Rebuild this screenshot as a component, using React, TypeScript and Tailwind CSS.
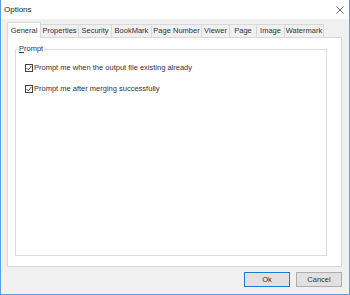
import React from "react";

const tabs = [
  { label: "General", w: 34, selected: true },
  { label: "Properties", w: 38 },
  { label: "Security", w: 33 },
  { label: "BookMark", w: 40 },
  { label: "Page Number", w: 50 },
  { label: "Viewer", w: 28 },
  { label: "Page", w: 27 },
  { label: "Image", w: 28 },
  { label: "Watermark", w: 39 },
];

function Check({ label }: { label: string }) {
  return (
    <div className="flex items-center h-[9px]">
      <div className="w-[8px] h-[8px] border border-[#444] bg-white flex items-center justify-center">
        <svg width="6" height="6" viewBox="0 0 6 6">
          <path d="M0.5 3 L2.3 4.8 L5.5 0.8" fill="none" stroke="#333" strokeWidth="0.9" />
        </svg>
      </div>
      <span className="ml-[1px] leading-none">{label}</span>
    </div>
  );
}

export default function App() {
  return (
    <div
      className="w-[350px] h-[295px] bg-[#f0f0f0] border-x border-b border-[#5b9fe0] flex flex-col text-[#333] text-[7.5px]"
      style={{ fontFamily: '"Liberation Sans", Arial, sans-serif' }}
    >
      <div className="h-[19px] bg-white flex items-center justify-between pl-[3px] pr-[5px]">
        <span className="text-[8px] text-[#222]">Options</span>
        <svg width="8" height="8" viewBox="0 0 8 8">
          <path d="M0.5 0.5 L7.5 7.5 M7.5 0.5 L0.5 7.5" stroke="#444" strokeWidth="0.8" />
        </svg>
      </div>
      <div className="flex flex-col pl-[6px] pr-[7px] pt-[3px]">
        <div className="flex items-end h-[15px] relative z-10">
          {tabs.map((t) =>
            t.selected ? (
              <div
                key={t.label}
                className="h-[16px] -mb-[1px] bg-white border border-b-0 border-[#d9d9d9] flex items-center justify-center"
                style={{ width: t.w }}
              >
                {t.label}
              </div>
            ) : (
              <div
                key={t.label}
                className="h-[13px] bg-[#f0f0f0] border border-l-0 border-b-0 border-[#d9d9d9] flex items-center justify-center"
                style={{ width: t.w }}
              >
                {t.label}
              </div>
            )
          )}
        </div>
        <div className="h-[230px] bg-white border border-[#d9d9d9] pl-[7px] pr-[14px] pt-[11px] pb-[10px]">
          <div className="h-full border border-[#dcdcdc] relative pl-[9px] pt-[13px]">
            <span className="absolute -top-[5px] left-[2px] bg-white px-[1px] leading-none">
              <span className="underline">P</span>rompt
            </span>
            <div className="flex flex-col gap-[12px]">
              <Check label="Prompt me when the output file existing already" />
              <Check label="Prompt me after merging successfully" />
            </div>
          </div>
        </div>
        <div className="flex justify-end gap-[6px] mt-[5px]">
          <div className="w-[46px] h-[15px] border border-[#1a7ad6] bg-[#e1e1e1] flex items-center justify-center">
            Ok
          </div>
          <div className="w-[46px] h-[15px] border border-[#adadad] bg-[#e1e1e1] flex items-center justify-center">
            Cancel
          </div>
        </div>
      </div>
    </div>
  );
}
